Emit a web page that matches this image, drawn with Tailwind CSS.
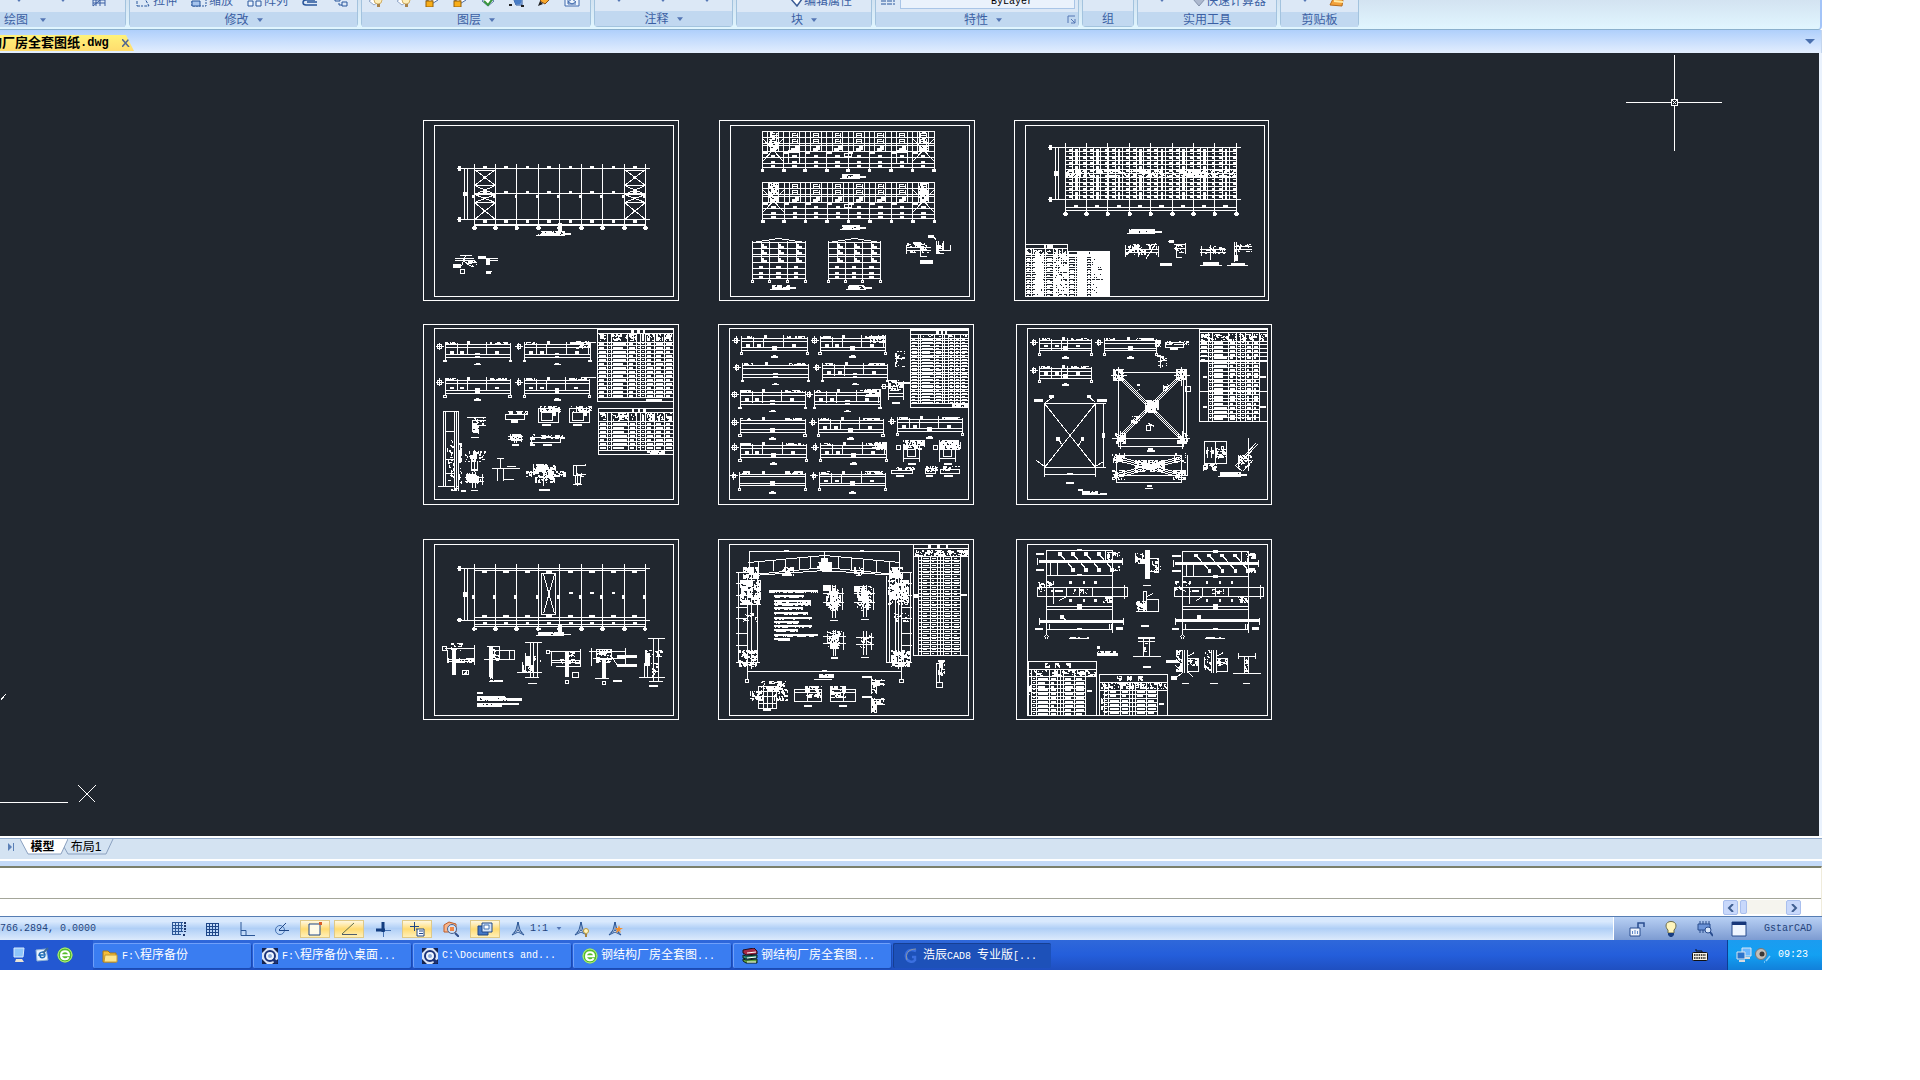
<!DOCTYPE html>
<html lang="zh-CN">
<head>
<meta charset="utf-8">
<title>GstarCAD</title>
<script src="https://cdn.jsdelivr.net/npm/@tailwindcss/browser@4"></script>
</head>
<body class="h-screen overflow-hidden bg-white font-['Liberation_Sans','Noto_Sans_CJK_SC',sans-serif] text-xs leading-4">
<svg class="hidden">
  <defs>
    <symbol id="down" viewBox="0 0 8 5"><path d="M0 0h8L4 5z" fill="#5476b4"/></symbol>
    <symbol id="layer" viewBox="0 0 16 16"><path d="M2 10l8-4 4 3-8 5z" fill="#fff" stroke="#4d6ea5"/><path d="M4 10V7h4v3" fill="none" stroke="#7a5510"/><rect x="2" y="10" width="7" height="6" fill="#f9ae18" stroke="#94600c"/></symbol>
    <symbol id="bulb" viewBox="0 0 16 16"><path d="M1 10l6-4 3 5-4 3z" fill="#fff" stroke="#94a9ca"/><circle cx="10" cy="9" r="4" fill="#fdeeba" stroke="#cfae68"/><rect x="9" y="13" width="3" height="3" fill="#a9834b"/></symbol>
    <symbol id="ie" viewBox="0 0 16 16"><circle cx="8" cy="8" r="7.5" fill="#57bd2c"/><circle cx="8" cy="8" r="7" fill="none" stroke="#baf28b"/><path d="M4 8.2h8c0-5.400-8-5.400-8 0 0 5 6 5 7.700 2" fill="none" stroke="#fff" stroke-width="2"/></symbol>
    <symbol id="search" viewBox="0 0 16 16"><path d="M0 0h16v16H0z" fill="#dce5f5"/><path d="M0 0h5L0 5zM16 0v5l-5-5zM0 16v-5l5 5zM16 16h-6l6-5z" fill="#14234f"/><circle cx="8" cy="8" r="5" fill="#eef5ff" stroke="#1c3378" stroke-width="2"/><circle cx="8" cy="8" r="2" fill="#8ba8d9"/><path d="M11 11l4 4" stroke="#1c3378" stroke-width="3"/></symbol>
    <symbol id="compass" viewBox="0 0 16 16"><path d="M8 1l2 8 4 5-6-3-6 3 4-5z" fill="#eef5ff" stroke="#2b5696"/><path d="M8 1v8M4 12l4-3 4 3" fill="none" stroke="#2b5696"/></symbol>
  </defs>
</svg>

<div class="mr-[98px] flex h-screen flex-col pb-[110px]">
  <!-- ribbon -->
  <header class="flex h-[30px] shrink-0 gap-[3px] overflow-hidden rounded-br border-r-2 border-b border-r-[#a3c4f8] border-b-[#8ab0cd] bg-linear-to-b from-[#d3e3f1] to-[#e1f6ff] text-[#3b5fa3]">
    <section class="flex h-[27px] w-[126px] shrink-0 flex-col rounded-b border-r border-b border-[#a3c3de] bg-[#dce8f6]">
      <div class="flex h-3 items-end gap-9 pb-[5px] pl-[15px]">
        <svg class="mb-[5px] h-1 w-2"><use href="#down"/></svg><svg class="mb-[5px] h-1 w-2"><use href="#down"/></svg>
        <svg class="-ml-3 size-4 shrink-0" viewBox="0 0 16 16"><path d="M2 5v10M14 5v10M2 9h12M2 15L14 5M5 15V8M9 15V7M2 12h12" fill="none" stroke="#3b5fa3"/></svg>
      </div>
      <h2 class="flex h-[15px] items-center gap-3 bg-[#c1d8f0] pl-1">绘图<svg class="h-1 w-[6px]"><use href="#down"/></svg></h2>
    </section>
    <section class="flex h-[27px] w-[229px] shrink-0 flex-col rounded-b border-x border-b border-[#a3c3de] bg-[#dce8f6]">
      <div class="flex h-3 items-end gap-[14px] pb-[5px] pl-[5px] leading-3 whitespace-nowrap">
        <button class="flex items-end gap-[2px]"><svg class="size-4" viewBox="0 0 16 16"><path d="M2 2v13M2 15h6M9 6l5 9h-5" fill="none" stroke="#29569c" stroke-dasharray="3 1"/></svg>拉伸</button>
        <button class="flex items-end gap-[2px]"><svg class="size-4" viewBox="0 0 16 16"><path d="M1 4v11h14V4" fill="none" stroke="#29569c" stroke-dasharray="2 1"/><path d="M1 10h8v5H1z" fill="#a6c4ed" stroke="#29569c"/></svg>缩放</button>
        <button class="flex items-end gap-[1px]"><svg class="size-4" viewBox="0 0 16 16"><path d="M1 2h5v5H1zM9 2h5v5H9zM1 10h5v5H1zM9 10h5v5H9z" fill="#edf4fd" stroke="#29569c"/></svg>阵列</button>
        <svg class="size-4 shrink-0" viewBox="0 0 16 16"><path d="M15 14H4c-4 0-4-5 0-5h9M15 11H5" fill="none" stroke="#29569c" stroke-width="1.500"/></svg>
        <svg class="size-4 shrink-0" viewBox="0 0 16 16"><path d="M3 6h5v4H3zM10 11h5v4h-5zM7 12v2h3" fill="none" stroke="#29569c"/></svg>
      </div>
      <h2 class="flex h-[15px] items-center justify-center gap-2 bg-[#c1d8f0]">修改<svg class="h-1 w-[6px]"><use href="#down"/></svg></h2>
    </section>
    <section class="flex h-[27px] w-[230px] shrink-0 flex-col rounded-b border-x border-b border-[#a3c3de] bg-[#dce8f6]">
      <div class="flex h-3 items-end gap-3 pb-[5px] pl-[6px]">
        <svg class="size-4"><use href="#bulb"/></svg><svg class="size-4"><use href="#bulb"/></svg><svg class="size-4"><use href="#layer"/></svg><svg class="size-4"><use href="#layer"/></svg>
        <svg class="size-4" viewBox="0 0 16 16"><path d="M2 10l6-4 6 4-6 5z" fill="#fff" stroke="#5577a8"/><path d="M4 10l4 4 6-8" fill="none" stroke="#38953c" stroke-width="2"/></svg>
        <svg class="size-4" viewBox="0 0 16 16"><path d="M4 4h10v10H8z" fill="#c3d5ef" stroke="#29569c"/><circle cx="10" cy="10" r="3.500" fill="#477cc6"/><path d="M1 14h3M13 15h3" stroke="#222" stroke-width="2"/></svg>
        <svg class="size-4" viewBox="0 0 16 16"><path d="M4 10L12 2l4 4-7 7z" fill="#f9a92c" stroke="#875018"/><path d="M2 15l2-5 3 3z" fill="#222"/></svg>
        <svg class="size-4" viewBox="0 0 16 16"><path d="M1 1h14v14H1z" fill="#edf4fd" stroke="#416bad"/><path d="M4 11l4-3 4 3-4 2zM4 8v5h8" fill="none" stroke="#416bad"/></svg>
      </div>
      <h2 class="flex h-[15px] items-center justify-center gap-2 bg-[#c1d8f0]">图层<svg class="h-1 w-[6px]"><use href="#down"/></svg></h2>
    </section>
    <section class="flex h-[27px] w-[139px] shrink-0 flex-col rounded-b border-x border-b border-[#a3c3de] bg-[#dce8f6]">
      <div class="flex h-3 items-start gap-9 pl-5">
        <svg class="h-[2px] w-2"><use href="#down"/></svg><svg class="h-[2px] w-2"><use href="#down"/></svg><svg class="h-[2px] w-2"><use href="#down"/></svg>
      </div>
      <h2 class="flex h-[15px] items-center justify-center gap-2 bg-[#c1d8f0]">注释<svg class="h-1 w-[6px]"><use href="#down"/></svg></h2>
    </section>
    <section class="flex h-[27px] w-[136px] shrink-0 flex-col rounded-b border-x border-b border-[#a3c3de] bg-[#dce8f6]">
      <div class="flex h-3 items-end pb-[5px] pl-[51px] leading-3 whitespace-nowrap"><button class="flex items-end"><svg class="size-4" viewBox="0 0 16 16"><path d="M3 8l6-5 5 5-5 7z" fill="#fff" stroke="#3b5c96" stroke-width="1.500"/></svg>编辑属性</button></div>
      <h2 class="flex h-[15px] items-center justify-center gap-2 bg-[#c1d8f0]">块<svg class="h-1 w-[6px]"><use href="#down"/></svg></h2>
    </section>
    <section class="flex h-[27px] w-[204px] shrink-0 flex-col rounded-b border-x border-b border-[#a3c3de] bg-[#dce8f6]">
      <div class="flex h-3 items-end gap-1 pb-[3px] pl-1">
        <svg class="mb-1 size-4" viewBox="0 0 16 16"><path d="M1 9h14M1 12h14M1 15h14" stroke="#29569c" stroke-dasharray="5 1"/></svg>
        <select aria-label="线型" class="h-5 w-[175px] shrink-0 appearance-none border border-[#a9c5e7] bg-[#eaf2fc] pt-1 pl-[90px] font-['Liberation_Mono',monospace] text-[10px] leading-4 text-black"><option>ByLayer</option></select>
      </div>
      <h2 class="flex h-[15px] items-center gap-2 bg-[#c1d8f0] pl-[88px]">特性<svg class="h-1 w-[6px]"><use href="#down"/></svg><svg class="mr-[2px] ml-auto size-[9px]" viewBox="0 0 9 9"><path d="M1 8V1h7M4 4l4 4M8 4v4H4" fill="none" stroke="#5476b4"/></svg></h2>
    </section>
    <section class="flex h-[27px] w-[52px] shrink-0 flex-col rounded-b border-x border-b border-[#a3c3de] bg-[#dce8f6]">
      <div class="h-3"></div>
      <h2 class="flex h-[15px] items-center justify-center bg-[#c1d8f0]">组</h2>
    </section>
    <section class="flex h-[27px] w-[140px] shrink-0 flex-col rounded-b border-x border-b border-[#a3c3de] bg-[#dce8f6]">
      <div class="flex h-3 items-end gap-6 pb-[5px] pl-5 leading-3 whitespace-nowrap"><svg class="mb-[5px] h-1 w-2"><use href="#down"/></svg><button class="flex items-end"><svg class="size-4" viewBox="0 0 16 16"><path d="M3 8l6-5 6 5-6 7z" fill="#adb9cf" stroke="#8593ac"/></svg>快速计算器</button></div>
      <h2 class="flex h-[15px] items-center justify-center bg-[#c1d8f0]">实用工具</h2>
    </section>
    <section class="flex h-[27px] w-[79px] shrink-0 flex-col rounded-b border-x border-b border-[#a3c3de] bg-[#dce8f6]">
      <div class="flex h-3 items-end gap-5 pb-[5px] pl-5"><svg class="mb-[5px] h-1 w-2"><use href="#down"/></svg><svg class="size-4" viewBox="0 0 16 16"><path d="M6 4l9-2-2 13-12-1z" fill="#f3a13a" stroke="#b56a1a"/><path d="M5 10l9 1" stroke="#ffe9a3" stroke-width="2"/></svg></div>
      <h2 class="flex h-[15px] items-center justify-center bg-[#c1d8f0]">剪贴板</h2>
    </section>
  </header>

  <!-- document tabs -->
  <nav class="flex h-[23px] shrink-0 items-end justify-between border-r border-[#c4d6ee] bg-linear-to-b from-[#afcffb] to-[#e3eefe] pb-[2px]">
    <div class="flex h-4 w-[134px] items-center gap-[13px] overflow-hidden rounded-tr-lg bg-linear-to-b from-[#fff27a] to-[#ffdc6e] font-bold text-black [clip-path:polygon(0_0,126px_0,134px_100%,0_100%)]">
      <a href="#" class="-ml-[11px] flex items-center text-[13px] whitespace-nowrap">构厂房全套图纸<span class="font-['Liberation_Mono',monospace] text-xs">.dwg</span></a>
      <button aria-label="关闭"><svg class="size-2" viewBox="0 0 8 8"><path d="M0 0l7 8M7 0L0 8" stroke="#536690" stroke-width="1.500"/></svg></button>
    </div>
    <button aria-label="列表" class="mr-[6px] mb-[7px]"><svg class="block h-[5px] w-[10px]" preserveAspectRatio="none" viewBox="0 0 8 5"><path d="M0 0h8L4 5z" fill="#4a70ae"/></svg></button>
  </nav>

  <!-- model space -->
  <main class="relative min-h-0 flex-1 overflow-hidden border-r-[3px] border-[#eaf2fd] bg-[#21272f]">
    <svg class="absolute top-0 left-0 h-[783px] w-[1819px]" viewBox="0 53 1819 783" shape-rendering="crispEdges">
      <path id="lines" fill="none" stroke="#fff"/>
      <path id="fills" fill="#fff"/>
    </svg>
  </main>

  <!-- layout tabs -->
  <nav class="flex h-[25px] shrink-0 items-start border-t-2 border-b-2 border-white bg-[#d4e3f2] text-black">
    <div class="flex h-[18px] w-full items-start border-t border-[#90a9cb]">
      <svg class="mt-1 mr-[6px] ml-2 h-2 w-[6px]" viewBox="0 0 6 8"><path d="M0 0l4 4-4 4z" fill="#5b80b7"/><path d="M5.500 0v8" stroke="#5b80b7"/></svg>
      <button class="relative h-4 w-12 font-bold"><svg class="absolute inset-0 h-4 w-12" viewBox="0 0 48 16"><path d="M0 0l8 15h33l7-15z" fill="#fff"/><path d="M0 0l8 15h33l7-15" fill="none" stroke="#8aa0bf"/></svg><span class="relative mr-[3px]">模型</span></button>
      <button class="relative h-4 w-12"><svg class="absolute top-0 -left-1 h-4 w-[50px]" viewBox="0 0 50 16"><path d="M0 8l4 7h38l7-15" fill="none" stroke="#8aa0bf"/></svg><span class="relative mr-3">布局1</span></button>
    </div>
  </nav>
  <div class="h-[5px] shrink-0 bg-[#c4daf8]"></div>

  <!-- command line -->
  <section class="flex h-[50px] shrink-0 flex-col border-t-2 border-r border-t-[#7b7f6c] border-r-[#f0ecdc] bg-white">
    <textarea aria-label="命令历史" class="block h-[30px] w-full resize-none"></textarea>
    <div class="flex h-[18px] items-start border-t border-[#a4a69a] pt-[1px] pr-5">
      <input aria-label="命令" class="h-[14px] flex-1">
      <button aria-label="向左" class="flex size-[15px] items-center justify-center rounded-xs border border-[#a9bfee] bg-[#c8d8fb]"><svg class="size-2" viewBox="0 0 8 8"><path d="M6 0L2 4l4 4" fill="none" stroke="#405f91" stroke-width="2"/></svg></button>
      <div class="flex h-[14px] w-12 bg-[#f5f4ee] pl-[2px]"><span class="h-[14px] w-[7px] rounded-xs border border-[#a9bfee] bg-[#c8d8fb]"></span></div>
      <button aria-label="向右" class="flex size-[15px] items-center justify-center rounded-xs border border-[#a9bfee] bg-[#c8d8fb]"><svg class="size-2" viewBox="0 0 8 8"><path d="M2 0l4 4-4 4" fill="none" stroke="#405f91" stroke-width="2"/></svg></button>
    </div>
  </section>

  <!-- status bar -->
  <section class="flex h-6 shrink-0 items-stretch border-t border-[#567db3] bg-linear-to-b from-[#d9e9fd] from-20% via-[#b0cff6] via-50% to-[#dceafc] font-['Liberation_Mono',monospace] text-[10px] text-[#24447c]">
    <div class="flex w-[164px] items-center whitespace-pre">766.2894, 0.0000</div>
    <div class="flex items-center gap-1">
      <button aria-label="捕捉" class="flex h-[18px] w-[30px] items-center justify-center"><svg class="size-4" viewBox="0 0 16 16"><path d="M1 1.500h11M1 4.500h11M1 7.500h11M1 10.500h11M1 13.500h9M1.500 1v13M4.500 1v13M7.500 1v13M10.500 1v10" stroke="#2b5696"/><path d="M14 1v10M12 14h3" stroke="#1e376a" stroke-width="2" stroke-dasharray="2 1"/></svg></button>
      <button aria-label="栅格" class="flex h-[18px] w-[30px] items-center justify-center"><svg class="size-4" viewBox="0 0 16 16"><path d="M1 2.500h13M1 5.500h13M1 8.500h13M1 11.500h13M1 14.500h13M1.500 2v13M4.500 2v13M7.500 2v13M10.500 2v13M13.500 2v13" stroke="#1e4688"/></svg></button>
      <button aria-label="正交" class="flex h-[18px] w-[30px] items-center justify-center"><svg class="size-4" viewBox="0 0 16 16"><path d="M2 1v13.500h14M2 9.500h5v5" fill="none" stroke="#2b5696"/></svg></button>
      <button aria-label="极轴" class="flex h-[18px] w-[30px] items-center justify-center"><svg class="size-4" viewBox="0 0 16 16"><circle cx="7" cy="9" r="4.500" fill="none" stroke="#4774b4"/><path d="M6 9.500h10M6 9l7-7" stroke="#1e4688"/></svg></button>
      <button aria-label="对象捕捉" class="flex h-[18px] w-[30px] items-center justify-center border border-[#dfc987] bg-linear-to-b from-[#fff8df] via-[#ffdb70] to-[#fff0b8]"><svg class="size-4" viewBox="0 0 16 16"><path d="M2 3h11v11H2z" fill="#fffbe9" stroke="#1e4688"/><rect x="12" y="1" width="3" height="3" fill="#d95c27"/></svg></button>
      <button aria-label="对象追踪" class="flex h-[18px] w-[30px] items-center justify-center border border-[#dfc987] bg-linear-to-b from-[#fff8df] via-[#ffdb70] to-[#fff0b8]"><svg class="size-4" viewBox="0 0 16 16"><path d="M1 13.500h15" stroke="#4c5c70"/><path d="M1 13L13 2" stroke="#60704f"/></svg></button>
      <button aria-label="动态 UCS" class="flex h-[18px] w-[30px] items-center justify-center"><svg class="size-4" viewBox="0 0 16 16"><path d="M8 1v10M1 9h9" stroke="#123d80" stroke-width="3"/><path d="M8.500 11v5M10 9.500h6" stroke="#4774b4"/></svg></button>
      <button aria-label="动态输入" class="flex h-[18px] w-[30px] items-center justify-center border border-[#dfc987] bg-linear-to-b from-[#fff8df] via-[#ffdb70] to-[#fff0b8]"><svg class="size-4" viewBox="0 0 16 16"><path d="M5.500 1v9M1 5.500h9" stroke="#1e4688"/><path d="M7 8h8v7H8v-7M10 10h4M10 12.500h4" fill="#fff" stroke="#1e4688"/></svg></button>
      <button aria-label="快捷特性" class="flex h-[18px] w-[30px] items-center justify-center"><svg class="size-4" viewBox="0 0 16 16"><path d="M1 4l5-3 7 2v8H1z" fill="#f9b58c" stroke="#be5d28"/><circle cx="9" cy="8" r="4.500" fill="#d3e2f5" stroke="#4b6592"/><path d="M7 6h4v4H7z" fill="#ef8747"/><path d="M12 12l4 4" stroke="#31508c" stroke-width="2"/></svg></button>
      <button aria-label="选择循环" class="flex h-[18px] w-[30px] items-center justify-center border border-[#dfc987] bg-linear-to-b from-[#fff8df] via-[#ffdb70] to-[#fff0b8]"><svg class="size-4" viewBox="0 0 16 16"><path d="M1 5h10v9H1z" fill="#4377c6" stroke="#1e4688"/><path d="M5 2h10v9H5z" fill="#d3e4fb" stroke="#1e4688"/><path d="M7 4h5v4H7z" fill="#fff" stroke="#4774b4"/></svg></button>
      <button aria-label="注释比例" class="ml-[6px] flex items-center gap-1"><svg class="size-4"><use href="#compass"/></svg><span>1:1</span><svg class="ml-1 h-[3px] w-[6px]"><use href="#down"/></svg></button>
      <button aria-label="注释可见性" class="relative ml-[7px] size-4"><svg class="size-4"><use href="#compass"/></svg><svg class="absolute right-0 bottom-0 h-[9px] w-[6px]" viewBox="0 0 6 9"><circle cx="3" cy="3" r="2.500" fill="#fff5bd" stroke="#bb9a3c"/><path d="M2 6h2v3H2z" fill="#a5803d"/></svg></button>
      <button aria-label="自动缩放" class="relative ml-[14px] size-4"><svg class="size-4"><use href="#compass"/></svg><svg class="absolute right-0 bottom-1 size-2" viewBox="0 0 8 8"><path d="M4 0l1 3h3L5 5l1 3-2-2-3 2 1-3-2-2h3z" fill="#f48e2a"/></svg></button>
    </div>
    <div class="ml-auto flex w-[209px] items-center gap-[18px] border-l border-white bg-linear-to-b from-[#b8d0f4] to-[#7d9bd1] pl-[15px]">
      <svg class="size-4" viewBox="0 0 16 16"><path d="M1 7h10v8H1z" fill="#f0f5fd" stroke="#294c8e"/><path d="M9 7V2h6v4" fill="none" stroke="#294c8e" stroke-width="1.500"/><path d="M3.500 13v-3M6 13V9M8.500 13v-3" stroke="#5d87c8"/></svg>
      <svg class="size-4" viewBox="0 0 16 16"><path d="M8 .5c6 0 6 6 3 8.500v3H5V9C2 6.500 2 .5 8 .5z" fill="#fff5bd" stroke="#6b6b49"/><path d="M5 12h6v2l-2 2H7l-2-2z" fill="#193e82"/></svg>
      <svg class="size-4" viewBox="0 0 16 16"><path d="M1 3h12v6H1z" fill="#6c94d9" stroke="#294c8e"/><path d="M3 0v3M6 0v3M9 0v3M12 0v3M3 9v3M6 9v3" stroke="#294c8e"/><circle cx="11" cy="9" r="3" fill="#d7e6fb" stroke="#294c8e"/><path d="M13 11l3 4" stroke="#294c8e" stroke-width="2"/></svg>
      <svg class="size-4" viewBox="0 0 16 16"><path d="M1 1h14v14H1z" fill="#eef5ff" stroke="#294c8e"/><path d="M1 2.500h14" stroke="#17377a" stroke-width="3"/></svg>
      <span class="-ml-[1px]">GstarCAD</span>
    </div>
  </section>

  <!-- taskbar -->
  <footer class="flex h-[30px] shrink-0 items-center bg-linear-to-b from-[#2f68da] via-[#245edb] to-[#1f4fc0] text-white">
    <div class="flex w-[93px] shrink-0 items-center gap-[7px] self-stretch bg-[#2358d2] pl-[11px]">
      <svg class="size-4" viewBox="0 0 16 16"><path d="M3 1h10l-1 9H3z" fill="#8fc6fa" stroke="#d9ebff"/><path d="M5 12h6l2 3H4z" fill="#e9e3d2"/></svg>
      <svg class="size-4" viewBox="0 0 16 16"><path d="M2 3l10-1 2 11-11 1z" fill="#eaf4ff" stroke="#90b3d7"/><path d="M5 9c0-5 6-5 6-1H6c0 4 4 3 5 1" fill="none" stroke="#1d6db9" stroke-width="1.500"/><path d="M9 6l5-5" stroke="#3e6c99" stroke-width="2"/></svg>
      <svg class="size-4"><use href="#ie"/></svg>
    </div>
    <div class="flex gap-[2px]">
      <button class="flex h-[25px] w-[158px] items-center gap-1 rounded-xs border-t border-l border-[#6fa0fa] bg-[#3a7df1] pl-2 whitespace-nowrap shadow-[1px_1px_0_#1b4bb4]"><svg class="size-4" viewBox="0 0 16 16"><path d="M1 3h5l2 2h6v9H1z" fill="#f4bd3b" stroke="#a77816"/><path d="M2 14l1-7h12v7z" fill="#fde68f" stroke="#c79a2d"/></svg><span><span class="font-['Liberation_Mono',monospace] text-[10px]">F:\</span>程序备份</span></button>
      <button class="flex h-[25px] w-[158px] items-center gap-1 rounded-xs border-t border-l border-[#6fa0fa] bg-[#3a7df1] pl-2 whitespace-nowrap shadow-[1px_1px_0_#1b4bb4]"><svg class="size-4"><use href="#search"/></svg><span><span class="font-['Liberation_Mono',monospace] text-[10px]">F:\</span>程序备份<span class="font-['Liberation_Mono',monospace] text-[10px]">\</span>桌面<span class="font-['Liberation_Mono',monospace] text-[10px]">...</span></span></button>
      <button class="flex h-[25px] w-[158px] items-center gap-1 rounded-xs border-t border-l border-[#6fa0fa] bg-[#3a7df1] pl-2 whitespace-nowrap shadow-[1px_1px_0_#1b4bb4]"><svg class="size-4"><use href="#search"/></svg><span class="font-['Liberation_Mono',monospace] text-[10px]">C:\Documents and...</span></button>
      <button class="flex h-[25px] w-[158px] items-center gap-[3px] rounded-xs border-t border-l border-[#6fa0fa] bg-[#3a7df1] pl-2 whitespace-nowrap shadow-[1px_1px_0_#1b4bb4]"><svg class="size-4"><use href="#ie"/></svg><span>钢结构厂房全套图<span class="font-['Liberation_Mono',monospace] text-[10px]">...</span></span></button>
      <button class="flex h-[25px] w-[158px] items-center gap-[3px] rounded-xs border-t border-l border-[#6fa0fa] bg-[#3a7df1] pl-2 whitespace-nowrap shadow-[1px_1px_0_#1b4bb4]"><svg class="size-4" viewBox="0 0 16 16"><path d="M1 2l11-2 3 3v3L4 7 1 5z" fill="#a52a48" stroke="#250d17"/><path d="M1 7l3 1 11-1v3L4 11 1 10z" fill="#2d8f75" stroke="#10241d"/><path d="M1 11l3 1 11-1v4H4l-3-2z" fill="#63a63d" stroke="#10241d"/><path d="M5 5l9-1M5 10l9-1M5 14h9" stroke="#fff"/></svg><span>钢结构厂房全套图<span class="font-['Liberation_Mono',monospace] text-[10px]">...</span></span></button>
      <button class="flex h-[25px] w-[158px] items-center gap-[3px] rounded-xs border-t border-l border-[#163f92] bg-[#1d51b9] pl-[10px] whitespace-nowrap"><svg class="size-4" viewBox="0 0 16 16"><path d="M12 3C5 0 1 4 2 9c1 5 7 6 9 3V9H8" fill="none" stroke="#3b6fe0" stroke-width="2.500"/><path d="M12 1C4 1 1 6 3 12" fill="none" stroke="#8c97a5"/></svg><span>浩辰<span class="font-['Liberation_Mono',monospace] text-[10px]">CAD8 </span>专业版<span class="font-['Liberation_Mono',monospace] text-[10px]">[...</span></span></button>
    </div>
    <svg class="mr-[19px] ml-auto h-3 w-4" viewBox="0 0 16 12"><path d="M4 0v2h6v2" fill="none" stroke="#111"/><rect x=".5" y="3.500" width="15" height="8" rx="1" fill="#f5f1e4" stroke="#111"/><path d="M2 6h12M2 9h12" stroke="#111" stroke-width="1.500" stroke-dasharray="1.500 .8"/></svg>
    <div class="flex w-[95px] items-center self-stretch border-l border-[#0b3f93] bg-linear-to-b from-[#1b9cf0] via-[#13a0f2] to-[#1280da] pl-2">
      <svg class="size-4" viewBox="0 0 16 16"><path d="M6 1h9v8H6z" fill="#68b7ff" stroke="#d9e6f2"/><path d="M1 5h8v7H1z" fill="#2b74cc" stroke="#dce6ee"/><path d="M3 14h6M9 11h5" stroke="#d9dce0" stroke-width="2"/></svg>
      <svg class="ml-[3px] size-4" viewBox="0 0 16 16"><circle cx="6" cy="7" r="5.500" fill="#c2bfba" stroke="#777"/><circle cx="7" cy="7" r="2.500" fill="#393636"/><path d="M11 14l4-5M9 15l1 0" stroke="#8bd0fc" stroke-width="1.500"/></svg>
      <time class="ml-[7px] font-['Liberation_Mono',monospace] text-[10px]">09:23</time>
    </div>
  </footer>
</div>

<script>
let seed = 7, strokes = '', fills = '';
const rnd = () => (seed = (seed * 16807) % 2147483647) / 2147483647;
// A pen for one drawing area: origin (ox, oy) and the number of drawing units per screen pixel.
const pen = (ox, oy, sx, sy) => {
  const X = x => Math.floor(ox + x / sx), Y = y => Math.floor(oy + y / sy);
  const four = (n, fn) => { for (let i = 0; i < n.length; i += 4) fn(n[i], n[i + 1], n[i + 2], n[i + 3]); };
  const p = {
    l: (...n) => four(n, (a, b, c, d) => {
      if (a === c || b === d) fills += `M${X(a)} ${Y(b)}H${X(c) + 1}V${Y(d) + 1}H${X(a)}z`;
      else strokes += `M${X(a) + .5} ${Y(b) + .5}L${X(c) + .5} ${Y(d) + .5}`;
    }),
    r: (...n) => four(n, (a, b, c, d) => p.l(a, b, c, b, a, d, c, d, a, b, a, d, c, b, c, d)),
    f: (...n) => four(n, (a, b, c, d) => { fills += `M${X(a)} ${Y(b)}H${X(c) + 1}V${Y(d) + 1}H${X(a)}z`; }),
    // broken marks, as lettering and small parts look at this zoom: each pixel tends to repeat its left or upper neighbour
    n: (a, b, c, d, q = .6) => {
      let above = [];
      for (let y = Y(b); y <= Y(d); y++) {
        const row = [];
        for (let x = X(a), i = 0; x <= X(c); x++, i++) {
          const t = rnd();
          row[i] = t < .35 && i ? row[i - 1] : t < .65 && above.length ? above[i] : rnd() < q;
          if (row[i]) fills += `M${x} ${y}h1v1h-1z`;
        }
        above = row;
      }
    },
    g: (xs, ys) => { xs.forEach(x => p.l(x, ys[0], x, ys.at(-1))); ys.forEach(y => p.l(xs[0], y, xs.at(-1), y)); },
    marks: (xs, y, w = 10) => xs.forEach(x => p.f(x - w / 2, y - 3, x + w / 2, y + 2)),
    dots: (xs, y) => xs.forEach(x => { p.f(x - 3, y - 5, x + 2, y + 5); p.f(x - 5, y - 1, x + 5, y + 1); }),
    title: (a, b, y) => { p.n(a, y - 8, b - 20, y, .9); p.l(a - 5, y + 3, b - 20, y + 3); p.f(b - 18, y - 2, b, y); },
    beam: (a, b, y, k = [0, 9, 29, 38], end = 0) => {
      k.forEach(o => p.l(a, y + o, b, y + o));
      p.l(a, y - 6, a, y + k[3] + 8, b, y - 3, b, y + k[3] + 8);
      p.r(a - 4, y + k[3] + 8, a + 3, y + k[3] + 13, b - 4, y + k[3] + 8, b + 3, y + k[3] + 13);
      p.r(a - 22, y, a - 12, y + 11); p.l(a - 27, y + 5, a - 6, y + 5, a - 17, y - 5, a - 17, y + 15);
      p.n(a + 5, y - 7, a + 30, y - 3, .75); p.f(a + 68, y - 9, a + 74, y - 3);
      p.n(b - 60, y - 7, b - 10, y - 3, .75);
      const m = (a + b) / 2;
      p.f(m - 6, y + k[2] - 4, m + 5, y + k[2] - 2, m - 6, y + k[3] - 4, m + 5, y + k[3] - 2);
      p.f(m - 9, y + k[3] + 20, m + 9, y + k[3] + 22, m - 4, y + k[3] + 17, m + 4, y + k[3] + 19);
      if (end !== 1) { p.l(a + 36, y - 3, a + 36, y + 28, a + 66, y, a + 66, y + 28, b - 72, y - 8, b - 72, y + 26); p.marks([a + 20, a + 52, b - 40], y + k[2] - 6, 9); }
      if (end === 2) { p.n(b - 45, y - 9, b, y + 12, .6); p.l(b - 6, y, b - 6, y + 28); }
    },
    // one solid entry in each cell, its length varied a little
    cells: (xs, y0, y1, n) => {
      const h = (y1 - y0) / n;
      for (let j = 0; j < xs.length - 1; j++) for (let i = 0; i < n; i++) {
        const w = xs[j + 1] - xs[j], y = y0 + i * h;
        if (w > 16) p.f(xs[j] + 6, y + 5, xs[j + 1] - 6 - (rnd() < .4 ? w * .2 : 0), y + 5 + (h > 11 ? 3 : 0));
        else if (w > 10) p.f(xs[j] + 5, y + 5, xs[j] + 7, y + 5);
      }
    },
    table: (a, b, c, d, cols, n, head = 24) => {
      const h = (d - b - head) / n, ys = [b, b + 12];
      for (let i = 0; i <= n; i++) ys.push(b + head + i * h);
      const xs = [a, ...cols, c];
      p.l(...ys.flatMap(y => [a, y, c, y]), a, b, a, d, c, b, c, d, ...cols.flatMap(x => [x, b + 12, x, d]));
      p.cells(xs, b + head, d, n);
      [.45, .53, .6].forEach(t => p.f(a + (c - a) * t, b + 4, a + (c - a) * t + 5, b + 9));
      xs.slice(0, -1).forEach((x, i) => { if (xs[i + 1] - x > 12) p.n(x + 4, b + 15, xs[i + 1] - 5, b + head - 4, .5); });
    },
    // small joint detail: plates, a stem, its dimension and its caption
    joint: (a, b, c, d, q = .4) => {
      const m = (a + c) / 2, w = c - a, h = d - b;
      p.l(a, b + h * .25, c, b + h * .25, a, b + h * .5, c, b + h * .5, m - 4, b, m - 4, d - 8, m + 4, b, m + 4, d - 8, c - 3, b + h * .1, c - 3, b + h * .7);
      p.n(a + w * .15, b + h * .05, c - w * .15, b + h * .65, q); p.f(m - 9, d, m + 9, d + 1);
    },
  };
  return p;
};
const range = (a, b, n) => Array.from({ length: n + 1 }, (_, i) => a + (b - a) * i / n);

// left column, upper sheets
let p = pen(415, 110, 3, 3);
p.r(25, 31, 791, 571, 58, 46, 776, 559, 25, 643, 791, 1184, 58, 656, 776, 1168);
const ax = [178, 241, 305, 370, 433, 499, 562, 628, 691];
const am = ax.slice(1).map((x, i) => (x + ax[i]) / 2);
ax.forEach(x => p.l(x, 163, x, 350));
p.l(135, 175, 704, 175, 135, 328, 704, 328, 178, 250, 691, 250, 178, 342, 691, 342, 178, 347, 691, 347, 148, 175, 148, 328, 157, 175, 157, 328);
p.marks(am, 171, 8); p.marks(am, 335, 8); p.marks(am, 248, 8); p.dots(ax, 354); p.dots([133], 175); p.dots([133], 328); p.f(145, 247, 156, 256);
ax.forEach(x => p.f(x - 5, 256, x, 263));
[[178, 241], [628, 691]].forEach(([a, b]) => {
  [[178, 226], [226, 252], [252, 277], [277, 328]].forEach(([c, d]) => { p.l(a, c, b, d, b, c, a, d, a, d, b, d); p.f((a + b) / 2 - 3, (c + d) / 2 - 2, (a + b) / 2 + 3, (c + d) / 2 + 2); });
  p.l(a, 180, b, 180);
});
p.title(369, 467, 373); p.f(429, 340, 440, 360);
p.l(122, 445, 175, 445, 122, 452, 175, 452, 135, 436, 170, 436, 150, 436, 138, 470, 145, 450, 165, 468, 190, 445, 248, 445, 215, 450, 248, 450);
p.f(190, 439, 211, 445, 213, 446, 223, 463, 116, 462, 135, 472); p.n(160, 452, 184, 468, .6); p.r(137, 479, 149, 490); p.n(214, 485, 229, 490, .9);
p.beam(90, 286, 704); p.beam(328, 525, 704, undefined, 2); p.beam(90, 285, 811); p.beam(328, 524, 811);
p.l(500, 698, 541, 698, 500, 801, 541, 801);
p.table(548, 658, 775, 862, [577, 588, 638, 665, 677, 690, 719, 747], 14, 38); p.r(548, 658, 775, 874); p.f(694, 867, 740, 872);
p.table(551, 894, 775, 1020, [577, 588, 641, 665, 677, 690, 719, 749], 7, 40); p.r(551, 894, 775, 1032); p.n(697, 1023, 749, 1030, .85);
p.l(85, 904, 85, 1130, 92, 904, 92, 1130, 118, 904, 118, 1140, 124, 904, 124, 1140, 130, 904, 130, 1140, 85, 904, 130, 904, 70, 1128, 118, 1128, 92, 965, 118, 965, 92, 1048, 118, 1048, 92, 1090, 118, 1090);
p.n(98, 990, 114, 1110, .22); p.n(132, 1000, 140, 1120, .5); p.n(108, 1130, 130, 1142, .4); p.f(138, 1141, 150, 1144);
p.l(157, 921, 212, 921, 172, 930, 212, 930, 172, 945, 212, 945); p.n(172, 923, 212, 945, .45); p.n(172, 945, 190, 970, .8); p.f(169, 981, 190, 983);
p.r(270, 913, 328, 928); p.n(280, 905, 336, 912, .6); p.f(290, 928, 308, 937);
[370, 463].forEach(x => { p.r(x, 896, x + 60, 937); p.r(x + 10, 908, x + 42, 932); p.n(x + 5, 888, x + 65, 906, .6); p.f(x + 42, 900, x + 52, 915, x + 12, 943, x + 35, 946); });
p.joint(280, 972, 322, 1004, .6); p.r(350, 982, 436, 996); p.n(345, 972, 358, 1005, .5); p.n(375, 976, 448, 984, .5); p.f(384, 1003, 410, 1006);
p.n(150, 1025, 210, 1055, .6); p.l(178, 1020, 178, 1085, 170, 1055, 170, 1080, 186, 1055, 186, 1080); p.f(168, 1079, 188, 1082);
p.n(155, 1092, 190, 1118, .9); p.joint(150, 1088, 205, 1140, .2);
p.l(256, 1045, 256, 1075, 247, 1045, 265, 1045, 233, 1075, 313, 1075, 247, 1075, 247, 1110, 265, 1075, 265, 1110, 265, 1108, 296, 1108, 278, 1070, 300, 1070);
p.n(355, 1062, 420, 1085, .7); p.n(330, 1085, 450, 1100, .6); p.n(360, 1100, 418, 1118, .65); p.f(374, 1138, 404, 1141); p.l(386, 1062, 386, 1125);
p.r(475, 1067, 483, 1095, 480, 1096, 495, 1120); p.l(483, 1067, 512, 1067, 483, 1094, 512, 1094, 488, 1090, 488, 1125); p.n(500, 1062, 512, 1098, .3); p.f(475, 1122, 498, 1124);

// middle column, upper sheets
p = pen(710, 110, 3, 3);
p.r(28, 31, 794, 571, 61, 46, 778, 559, 25, 643, 791, 1184, 58, 656, 776, 1168);
[[157, 64, 1], [158, 217, 0]].forEach(([x0, y0, doors]) => {
  const xs = range(x0, x0 + 515, 8);
  p.l(...[0, 18, 36, 42, 60, 79, 97, 109].flatMap(o => [x0, y0 + o, x0 + 515, y0 + o]));
  xs.forEach((x, i) => {
    p.l(x, y0, x, y0 + 118); p.f(x - 4, y0 + 115, x + 4, y0 + 121);
    if (i < 8) {
      p.l(x + 16, y0, x + 16, y0 + 60, x + 48, y0, x + 48, y0 + 60);
      [5, 23].forEach(o => { p.l(x + 25, y0 + o, x + 25, y0 + o + 9, x + 41, y0 + o, x + 41, y0 + o + 9, x + 25, y0 + o + 6, x + 41, y0 + o + 6); p.f(x + 28, y0 + o, x + 36, y0 + o + 1); });
      p.f(x + 34, y0 + 43, x + 43, y0 + 55, x + 24, y0 + 52, x + 36, y0 + 56);
      p.marks([x + 32], y0 + 76); p.marks([x + 32], y0 + 94); p.marks([x + 32], y0 + 106); p.f(x + 2, y0 + 63, x + 14, y0 + 67);
    }
  });
  [0, 7].forEach(i => { const a = xs[i], b = xs[i + 1]; p.l(a, y0 + 20, b, y0 + 90, b, y0 + 20, a, y0 + 90); p.n(a + 20, y0 + 3, b - 18, y0 + 56, .5); });
  p.r(x0 + 246, y0 + 66, x0 + 266, y0 + 76);
  if (doors) [78, 402].forEach(o => { p.f(x0 + o, y0 + 58, x0 + o + 34, y0 + 62); p.l(x0 + o, y0 + 60, x0 + o, y0 + 97, x0 + o + 34, y0 + 60, x0 + o + 34, y0 + 97); });
  p.title(396, 467, y0 + 137);
});
[[127, 285], [355, 510]].forEach(([a, b]) => {
  const xs = range(a, b, 3), m = (a + b) / 2;
  p.l(a, 396, m, 385, m, 385, b, 396);
  p.l(...[396, 415, 434, 439, 457, 475, 493, 505].flatMap(y => [a, y, b, y]));
  xs.forEach((x, i) => { p.l(x, 393, x, 510); p.r(x - 3, 511, x + 3, 517); if (i < 3) { p.l(x + 26, 396, x + 26, 457); [404, 422, 444].forEach(y => p.f(x + 26, y, x + 32, y + 9, x + 32, y + 6, x + 41, y + 9)); p.marks([x + 26], 472); p.marks([x + 26], 490); p.marks([x + 26], 503); } });
  p.title(a + 60, a + 130, 535);
});
p.l(588, 405, 588, 430, 588, 412, 660, 412, 588, 420, 660, 420, 610, 397, 630, 397, 630, 405, 630, 440, 630, 440, 648, 440, 679, 395, 679, 430, 685, 395, 685, 430, 700, 395, 700, 420, 694, 421, 720, 421, 720, 405, 720, 421, 671, 380, 680, 392);
p.n(592, 400, 655, 428, .4); p.f(656, 377, 671, 382, 630, 452, 666, 460); p.n(683, 400, 700, 430, .3);
const k5 = [0, 8, 27, 35];
[[95, 292, 685, 0], [330, 527, 685, 2], [97, 295, 767, 1], [337, 533, 767, 0], [90, 287, 848, 0], [314, 510, 848, 2], [90, 285, 931, 1], [325, 519, 931, 0], [562, 757, 928, 0], [90, 290, 1006, 0], [332, 530, 1006, 2], [88, 287, 1092, 1], [328, 527, 1092, 0]].forEach(([a, b, y, e]) => p.beam(a, b, y, k5, e));
p.l(290, 1010, 290, 1040, 285, 1095, 285, 1125);
p.table(602, 660, 775, 880, [624, 632, 674, 696, 704, 714, 733, 751], 23, 24); p.r(602, 658, 775, 892); p.n(726, 882, 774, 890, .85);
p.n(555, 725, 582, 768, .35); p.l(560, 730, 560, 760, 555, 745, 582, 745);
p.l(515, 829, 535, 829, 535, 815, 535, 867, 581, 815, 581, 867, 535, 850, 581, 850, 535, 860, 581, 860); p.r(517, 823, 527, 834); p.n(535, 810, 581, 840, .65); p.f(565, 818, 600, 820, 548, 878, 568, 880);
[[580, 628], [689, 737]].forEach(([a, b]) => { p.r(a, 1006, b, 1045); p.n(a, 992, b + 15, 1018, .7); p.r(a + 12, 1018, b - 12, 1038); p.r(a - 20, 1006, a - 8, 1018); p.l(a, 1045, a, 1053, b, 1045, b, 1053); p.f(a + 14, 1059, a + 35, 1062); });
p.r(543, 1080, 608, 1090, 645, 1076, 675, 1090, 690, 1078, 748, 1090); p.n(550, 1073, 612, 1079, .4); p.n(700, 1070, 748, 1082, .5); p.n(650, 1070, 682, 1084, .4);
p.f(558, 1095, 580, 1099, 648, 1095, 668, 1099, 703, 1095, 727, 1099);

// right column, upper sheets
p = pen(1005, 110, 3, 3);
p.r(28, 31, 791, 571, 61, 46, 778, 559, 34, 643, 800, 1184, 67, 656, 788, 1168);
const cx = [181, 244, 308, 374, 437, 502, 565, 629, 694];
p.g(range(181, 694, 24), range(112, 268, 12));
cx.forEach(x => p.l(x, 101, x, 307)); p.dots(cx, 312);
for (let i = 0; i < 24; i++) for (let j = 0; j < 12; j++) {
  const x = 181 + i * 21.4, y = 112 + j * 13;
  if (i % 3 === 1) p.f(x + 9, y + (j % 2 ? 3 : 5), x + 14, y + 11); else p.f(x + 12, y + 5, x + 19, y + (j % 3 ? 6 : 9));
}
p.n(183, 181, 692, 201, .5);
p.l(140, 112, 707, 112, 140, 268, 707, 268, 151, 112, 151, 268, 160, 112, 160, 268, 181, 292, 694, 292, 181, 301, 694, 301);
p.marks(cx.slice(1).map((x, i) => (x + cx[i]) / 2), 289); p.dots([136], 112); p.dots([136], 268); p.f(147, 183, 160, 196);
p.title(372, 469, 367);
p.table(61, 403, 186, 558, [80, 121, 144, 158, 172], 17, 30); p.n(90, 435, 114, 556, .95); p.n(148, 435, 184, 556, .7);
p.table(190, 424, 314, 558, [212, 245, 258, 272], 17, 8); p.f(217, 424, 243, 558, 273, 424, 300, 470, 300, 424, 314, 558); p.n(258, 424, 300, 558, .7);
p.l(361, 405, 361, 438, 361, 417, 459, 417, 361, 427, 459, 427, 459, 410, 459, 438, 420, 447, 452, 400, 400, 405, 400, 438); p.n(363, 402, 455, 432, .45);
p.l(490, 394, 508, 398, 508, 402, 542, 402, 508, 415, 542, 415, 513, 402, 513, 442, 513, 442, 528, 442, 541, 400, 541, 430); p.f(494, 391, 506, 397, 465, 460, 499, 467); p.n(510, 402, 540, 428, .3);
p.l(587, 417, 660, 417, 587, 427, 660, 427, 617, 405, 617, 447, 589, 410, 589, 435); p.n(600, 408, 630, 431, .5); p.n(640, 411, 658, 431, .6); p.f(594, 457, 641, 463); p.l(587, 466, 648, 466);
p.l(688, 398, 688, 455, 694, 398, 694, 440, 690, 408, 740, 408, 690, 418, 740, 418); p.n(692, 402, 740, 424, .4); p.f(687, 435, 698, 452); p.f(680, 460, 718, 464); p.l(668, 466, 728, 466);
p.beam(103, 260, 692, [0, 8, 22, 30]); p.beam(298, 455, 692, [0, 8, 22, 30], 1); p.beam(103, 260, 776, [0, 8, 20, 28]);
p.n(450, 690, 465, 708, .8); p.r(480, 698, 536, 712); p.n(485, 694, 550, 702, .5); p.f(497, 711, 518, 718); p.n(458, 735, 485, 770, .4); p.l(467, 735, 467, 772);
// member schedule: the outer columns are undivided below the first rows
p.r(584, 658, 787, 933); p.l(584, 668, 787, 668, 584, 693, 787, 693, 584, 755, 787, 755, 584, 844, 787, 844);
[610, 621, 669, 695, 707, 721, 741, 763].forEach(x => p.l(x, 668, x, 933));
range(693, 933, 21).forEach((y, i) => p.l(i < 6 ? 584 : 610, y, i < 6 ? 787 : 763, y));
p.cells([610, 621, 669, 695, 707, 721, 741, 763], 693, 933, 21); p.cells([584, 610], 693, 755, 5); p.n(588, 672, 783, 690, .4);
p.f(595, 800, 604, 803, 595, 888, 604, 891, 766, 798, 782, 801, 766, 888, 782, 891);
p.r(118, 880, 271, 1072); p.l(118, 880, 271, 1072, 271, 880, 118, 1072, 271, 880, 302, 880, 295, 880, 295, 1072, 271, 1072, 302, 1072, 118, 1072, 118, 1100, 271, 1072, 271, 1100, 118, 1094, 271, 1094);
p.l(120, 876, 145, 858, 271, 876, 250, 858, 95, 1052, 118, 1070, 271, 1070, 295, 1053, 160, 985, 170, 1003, 232, 985, 220, 1007);
p.f(88, 867, 113, 873, 278, 867, 304, 873, 154, 982, 162, 990, 229, 982, 236, 990, 133, 857, 145, 862, 247, 856, 256, 863, 292, 970, 298, 982, 188, 1090, 201, 1093, 184, 1118, 205, 1120);
p.f(221, 1138, 232, 1141); p.n(231, 1144, 278, 1151, .95); p.l(231, 1154, 290, 1154); p.f(285, 1150, 305, 1153);
p.r(341, 788, 536, 1008); p.l(341, 985, 545, 985, 545, 788, 545, 985);
[-6, 0, 6].forEach(o => p.l(341 + o, 795, 530 + o, 985, 530 + o, 795, 341 + o, 985));
[[341, 795], [530, 795], [345, 985], [532, 985]].forEach(([x, y]) => { p.n(x - 15, y - 16, x + 15, y + 16, .7); p.l(x - 22, y, x + 22, y, x, y - 22, x, y + 30); });
p.n(422, 872, 460, 908, .85); p.n(380, 918, 402, 940, .6); p.n(390, 822, 402, 840, .5); p.n(475, 822, 490, 840, .5); p.r(424, 946, 437, 962); p.l(430, 940, 448, 948); p.r(540, 828, 557, 845); p.f(427, 1022, 448, 1025, 431, 1014, 443, 1019);
p.r(335, 1037, 529, 1116, 335, 1097, 548, 1097); p.l(548, 1037, 548, 1097);
[-6, 0, 6].forEach(o => p.l(338, 1045 + o, 530, 1095 + o, 530, 1045 + o, 338, 1095 + o));
[[340, 1043], [524, 1043], [340, 1093], [524, 1093]].forEach(([x, y]) => p.n(x - 18, y - 12, x + 18, y + 14, .65)); p.n(390, 1050, 478, 1085, .65); p.f(422, 1134, 442, 1136, 427, 1125, 438, 1130);
p.r(599, 995, 664, 1060); p.l(631, 995, 631, 1060, 607, 1012, 607, 1043, 620, 1012, 620, 1043); p.n(604, 1020, 624, 1030, .6); p.n(634, 1008, 662, 1046, .45); p.n(596, 1063, 634, 1080, .6);
p.l(758, 1003, 700, 1062, 750, 1000, 692, 1065, 692, 1065, 712, 1084, 712, 1084, 742, 1050, 730, 985, 730, 1082, 715, 1035, 735, 1055); p.n(700, 1035, 738, 1070, .35); p.title(646, 725, 1096);

// lower row, first two sheets
p = pen(415, 530, 2.751, 3);
p.r(23, 28, 725, 569, 53, 43, 711, 556, 835, 28, 1537, 569, 865, 43, 1523, 556);
const gx = [163, 221, 280, 339, 398, 458, 516, 576, 633];
const gm = gx.slice(1).map((x, i) => (x + gx[i]) / 2);
gx.forEach(x => { p.l(x, 102, x, 295); p.f(x - 5, 195, x, 206); }); p.dots(gx, 296);
p.l(125, 115, 645, 115, 163, 122, 633, 122, 163, 262, 633, 262, 125, 271, 645, 271, 163, 283, 633, 283, 163, 288, 633, 288, 136, 115, 136, 271, 144, 115, 144, 271);
p.marks(gm, 126, 12); p.marks(gm, 260, 12); p.marks(gm, 279, 8); p.marks(gm.slice(4, 7), 189, 8); p.f(133, 187, 145, 199); p.dots([122], 115); p.dots([122], 270);
p.r(349, 130, 387, 254); p.l(353, 132, 384, 250, 384, 132, 353, 250); p.title(340, 429, 314); p.f(394, 282, 404, 305);
p.r(77, 350, 86, 361); p.l(85, 356, 163, 356, 90, 388, 163, 388, 90, 395, 163, 395, 163, 347, 163, 402, 90, 360, 90, 395); p.f(103, 358, 112, 434); p.n(100, 340, 130, 362, .5); p.n(90, 384, 165, 398, .5); p.r(132, 420, 146, 434); p.n(136, 422, 143, 432, .7);
p.l(200, 348, 232, 348, 232, 348, 232, 388, 190, 388, 274, 388, 216, 361, 274, 361, 274, 361, 274, 388, 259, 361, 259, 388); p.f(206, 350, 213, 440); p.n(213, 358, 230, 390, .45); p.n(205, 440, 218, 455, .5); p.f(220, 452, 240, 455);
p.l(305, 337, 348, 337, 319, 337, 319, 440, 325, 337, 325, 440, 337, 337, 337, 443, 283, 427, 348, 427, 297, 397, 297, 427, 303, 370, 303, 427, 303, 442, 340, 442); p.f(303, 378, 314, 405); p.n(298, 405, 325, 427, .5); p.n(328, 370, 346, 395, .3); p.f(312, 459, 333, 461);
p.r(362, 362, 370, 370); p.l(370, 365, 456, 365, 376, 390, 456, 390, 376, 397, 456, 397, 376, 365, 376, 405, 456, 358, 456, 408, 390, 408, 456, 408); p.f(414, 363, 422, 440); p.n(388, 388, 456, 400, .5); p.r(414, 451, 423, 460, 434, 428, 450, 442); p.n(425, 365, 440, 380, .5);
p.l(486, 355, 486, 405, 480, 365, 578, 365, 490, 385, 578, 385, 578, 355, 578, 400, 540, 378, 557, 405, 497, 445, 532, 445); p.r(500, 358, 540, 388); p.n(500, 358, 540, 398, .5); p.f(515, 385, 524, 445, 557, 376, 608, 381, 557, 404, 608, 409); p.r(515, 453, 523, 463); p.f(546, 451, 567, 453);
p.l(641, 325, 685, 325, 655, 325, 655, 450, 669, 325, 669, 455, 618, 441, 685, 441, 630, 400, 630, 440, 640, 380, 640, 440, 645, 455, 680, 455); p.f(634, 370, 646, 405); p.n(633, 360, 680, 380, .5); p.n(650, 400, 669, 440, .2); p.f(646, 467, 668, 469);
p.f(173, 487, 186, 491); p.n(173, 499, 248, 503, .95); p.n(173, 505, 292, 510, .9); p.n(173, 519, 284, 523, .95); p.n(173, 525, 238, 530, .95);

p.l(920, 64, 1332, 64, 920, 64, 920, 120, 1332, 64, 1332, 120, 1126, 64, 1126, 100, 917, 97, 1126, 76, 1126, 76, 1335, 97, 930, 132, 1126, 112, 1126, 112, 1325, 132, 930, 137, 1126, 120, 1126, 120, 1325, 137);
[[945, 96, 125], [985, 90, 122], [1020, 88, 120], [1058, 84, 118], [1088, 80, 115], [1165, 80, 115], [1200, 84, 118], [1235, 88, 120], [1270, 92, 124], [1305, 96, 128]].forEach(([x, a, b]) => p.l(x, a, x, b));
p.n(1108, 98, 1146, 125, .8); p.f(1118, 84, 1135, 105); p.n(1012, 112, 1040, 136, .65); p.n(1208, 112, 1235, 136, .65); p.n(905, 112, 945, 145, .8); p.n(1305, 112, 1340, 145, .8);
p.marks([1022, 1230], 63, 10);
p.l(889, 128, 889, 398, 1363, 128, 1363, 398, 884, 397, 948, 397, 1298, 397, 1367, 397, 884, 128, 925, 128, 1325, 128, 1367, 128, 914, 140, 914, 448, 926, 140, 926, 415, 943, 140, 943, 397, 1298, 140, 1298, 397, 1322, 140, 1322, 397, 1330, 140, 1330, 415, 1338, 140, 1338, 448, 914, 424, 1338, 424, 1304, 140, 1304, 397);
[160, 195, 232, 264, 310, 345].forEach(y => p.l(884, y, 914, y, 1338, y, 1367, y));
p.n(895, 150, 950, 222, .7); p.n(1302, 150, 1357, 222, .7); p.n(903, 250, 940, 275, .3); p.n(1310, 250, 1357, 275, .3); p.n(893, 360, 940, 410, .6); p.n(1310, 360, 1360, 410, .6); p.r(909, 449, 918, 457, 1334, 449, 1343, 457);
p.n(1112, 433, 1150, 442, .8); p.l(1100, 447, 1146, 447); p.f(1120, 421, 1133, 424);
// general notes
p.f(975, 181, 988, 187);
[[181, 1106], [195, 1070], [209, 1088], [220, 1088], [232, 1066], [246, 1080], [260, 1092], [273, 1055], [286, 1092], [298, 1053], [311, 1106], [323, 1030]].forEach(([y, x]) => { p.f(990, y + 1, x, y + 4); p.n(993, y + 5, x, y + 7, .55); });
[[1125, 165, 1180, 262], [1210, 165, 1265, 260], [1125, 300, 1183, 375], [1215, 303, 1260, 373]].forEach(([a, b, c, d], i) => { p.joint(a, b, c, d + 8, i === 3 ? .15 : .45); p.n((a + c) / 2 - 10, b + 15, (a + c) / 2 + 10, d - 20, i === 3 ? .3 : .6); });
p.f(1125, 165, 1142, 181, 1208, 170, 1222, 185);
p.r(1371, 44, 1522, 376); p.l(1371, 56, 1522, 56, 1371, 80, 1522, 80); [1384, 1393, 1419, 1437, 1445, 1454, 1477, 1500].forEach(x => p.l(x, 80, x, 376));
range(80, 376, 27).forEach(y => p.l(1384, y, 1500, y)); p.cells([1393, 1419, 1437], 80, 376, 27); p.cells([1454, 1477, 1500], 80, 376, 27); p.n(1374, 60, 1520, 78, .6); p.f(1375, 192, 1382, 202, 1503, 193, 1518, 197);
[1413, 1437, 1461].forEach(x => p.f(x, 47, x + 5, 53));
p.l(1434, 400, 1434, 455, 1442, 400, 1442, 455, 1449, 392, 1449, 430, 1434, 400, 1449, 400); p.n(1441, 392, 1457, 435, .5); p.r(1434, 456, 1450, 472);
p.g([945, 958, 970, 983, 995], [470, 485, 500, 520, 535]); p.n(922, 485, 960, 512, .6); p.n(950, 455, 1020, 480, .5); p.n(990, 478, 1025, 510, .7); p.f(958, 538, 978, 541);
[[1044, 1118, 1075], [1142, 1213, 1142]].forEach(([a, b, c]) => { p.r(a, 478, b, 515); p.l(a, 487, b, 487, (a + b) / 2, 478, (a + b) / 2, 515); p.n(c, 470, c + 42, 503, .65); p.f((a + b) / 2 - 9, 527, (a + b) / 2 + 9, 529); });
[440, 498].forEach(y => { p.f(1232, y, 1254, y + 3); p.l(1257, y, 1257, y + 50, 1269, y + 10, 1269, y + 50, 1255, y + 10, 1292, y + 10, 1255, y + 24, 1292, y + 24); p.n(1257, y + 8, 1288, y + 26, .55); p.n(1257, y + 25, 1269, y + 48, .6); });

// lower row, last sheet
p = pen(1000, 530, 3, 3);
p.r(50, 28, 815, 569, 83, 43, 803, 556);
[[139, 337, 0], [548, 745, 4]].forEach(([a, b, o]) => {
  const m = (a + b) / 2;
  p.l(a, 61 + o, b, 61 + o, a, 61 + o, a, 313, b, 61 + o, b, 308, a, 136 + o, b, 136 + o, a, 229, b, 229, a, 238, b, 238, a, 298, b, 298);
  p.f(a - 22, 92 + o, b + 28, 98 + o, a - 22, 272 - o, b + 34, 278 - o);
  p.l(a - 28, 86 + o, a - 28, 104 + o, b + 30, 86 + o, b + 30, 104 + o, a - 22, 265, a - 22, 284, b + 34, 265, b + 34, 284);
  [178, 217, 256, 294].forEach(x => { const X = x - 139 + a; p.f(X - 3, 68 + o, X + 6, 76 + o, X + 37, 115 + o, X + 45, 123 + o); p.l(X, 70 + o, X + 42, 118 + o); });
  p.f(a - 30, 71 + o, a - 8, 74 + o, a - 30, 117 + o, a - 8, 120 + o); p.n(b + 4, 66 + o, b + 20, 80 + o, .5); p.n(b + 4, 110 + o, b + 20, 122 + o, .5);
  p.l(a + 12, 99 + o, a + 12, 136 + o, a + 32, 99 + o, a + 32, 136 + o, b - 20, 61 + o, b - 20, 92 + o); p.n(b - 14, 62 + o, b, 90 + o, .4);
  p.r(a - 26, 172, b + 46, 199); p.l(a + 20, 172, a + 20, 220, a + 60, 172, a + 60, 199, a + 98, 172, a + 98, 199, a + 138, 172, a + 138, 199, b + 35, 165, b + 35, 204);
  p.n(a - 24, 155, a + 22, 185, .35); p.f(a + 28, 180, a + 48, 184); p.n(a + 80, 178, a + 122, 190, .4); p.n(b - 30, 198, b, 216, .45); p.l(a + 40, 212, a + 60, 198);
  [70, 110, 145].forEach(x => p.f(a + x, 154, a + x + 4, 161, a + x, 207, a + x + 4, 213));
  p.marks([m], 60 + o, 14); p.marks([m], 135 + o, 14); p.f(m - 6, 222, m + 5, 234, m - 5, 295, m + 5, 299); p.n(m - 28, 321, m + 28, 324, .6); p.l(m - 30, 326, m + 28, 326);
  p.f(a + 43, 256, a + 52, 265); p.l(a + 47, 260, a + 60, 273); p.l(a + 8, 282, a + 8, 298, b - 8, 282, b - 8, 298, b - 4, 282, b - 4, 298); p.f(a - 32, 295, a - 12, 299, b + 12, 293, b + 30, 297);
  p.l(a - 6, 320, a, 313, a, 313, a + 6, 320, a - 6, 320, a, 327, a, 327, a + 6, 320);
});
p.f(435, 62, 448, 145); p.n(407, 70, 435, 100, .4); p.r(448, 86, 475, 124); p.n(448, 88, 482, 126, .25); p.f(430, 165, 450, 167);
p.r(429, 185, 440, 243, 440, 208, 474, 243); p.n(408, 215, 440, 245, .45); p.l(440, 200, 460, 190, 410, 243, 474, 243); p.f(424, 287, 445, 289);
p.f(415, 322, 462, 326); p.l(431, 326, 431, 378, 447, 326, 447, 378, 400, 378, 482, 378, 415, 333, 462, 333); p.n(431, 340, 447, 365, .35); p.f(430, 410, 450, 413);
p.f(292, 350, 299, 354, 292, 370, 353, 376); p.n(292, 365, 345, 368, .6);
[[548, 562], [634, 648]].forEach(([a, b]) => { p.l(a, 362, a, 428, a + 6, 362, a + 6, 428, b, 362, b, 428); p.r(b, 386, b + 34, 424); p.n(b, 388, b + 30, 406, .45); p.n(a - 20, 362, a, 424, .35); p.l(b, 380, b + 22, 366, a, 424, a - 22, 405); p.f(a - 2, 459, a + 18, 461); });
p.f(498, 391, 532, 397, 513, 438, 530, 447); p.l(548, 428, 530, 443, 562, 424, 580, 442);
p.l(715, 378, 765, 378, 732, 382, 732, 430, 746, 382, 746, 430, 699, 429, 782, 429, 715, 370, 715, 385, 765, 370, 765, 385); p.n(732, 382, 746, 425, .35); p.f(730, 459, 748, 461);
[[84, 395, 290, [95, 108, 147, 171, 180, 190, 223, 257], 10, 45], [299, 434, 502, [312, 324, 361, 389, 398, 407, 440, 473], 6, 46]].forEach(([a, b, c, cols, n, h]) => {
  p.r(a, b, c, 556); p.l(a, b + 22, c, b + 22, a, b + h, c, b + h);
  cols.forEach(x => p.l(x, b + 22, x, 556));
  range(b + h, 556, n).forEach(y => p.l(a + 12, y, cols[7], y));
  p.cells(cols, b + h, 556, n);
  p.n(a + 4, b + 26, c - 4, b + h - 5, .4); [52, 82, 115].forEach(x => p.n(a + x, b + 5, a + x + 12, b + 16, .7)); p.n(a + 4, b + 70, a + 9, b + 105, .7); p.f(cols[7] + 4, b + 85, cols[7] + 18, b + 89);
});

// crosshair cursor and UCS axis
p = pen(0, 0, 1, 1);
p.l(1626, 102, 1670, 102, 1678, 102, 1721, 102, 1674, 55, 1674, 98, 1674, 106, 1674, 150);
p.r(1671, 99, 1677, 105); p.l(1672, 104, 1676, 100, 1672, 100, 1676, 104);
p.l(0, 802, 67, 802, 78, 785, 95, 802, 95, 785, 78, 802, 0, 700, 5, 694);
document.getElementById('lines').setAttribute('d', strokes);
document.getElementById('fills').setAttribute('d', fills);
</script>
</body>
</html>
